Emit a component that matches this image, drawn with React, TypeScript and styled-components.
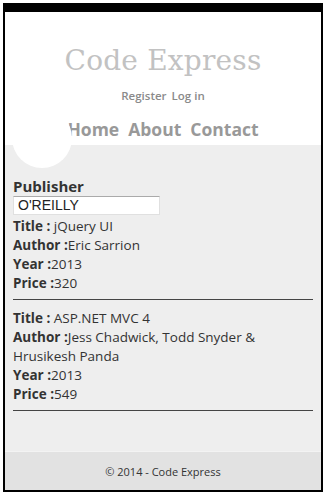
import React from "react";
import styled, { createGlobalStyle } from "styled-components";

const GlobalStyle = createGlobalStyle`
  html, body {
    margin: 0;
    padding: 0;
    background: #fff;
  }
`;

const Frame = styled.div`
  margin: 3px 3px 0 3px;
  height: 478px;
  border: 2px solid #000;
  border-top-width: 9px;
  display: flex;
  flex-direction: column;
  font-family: "Open Sans", "Noto Sans", sans-serif;
  color: #333;
`;

const Header = styled.header`
  height: 133px;
  background: #fff;
  display: flex;
  flex-direction: column;
  align-items: center;
  padding-top: 32px;
  box-sizing: border-box;
`;

const SiteTitle = styled.h1`
  margin: 0;
  font-family: "DejaVu Serif", serif;
  font-weight: 400;
  font-size: 28px;
  line-height: 34px;
  color: #c2c2c2;
  letter-spacing: 0.2px;
`;

const LoginLinks = styled.div`
  margin-top: 10px;
  display: flex;
  gap: 5px;
  font-size: 11.5px;
  font-weight: 600;
  line-height: 16px;
  color: #8a8a8a;
`;

const Menu = styled.nav`
  margin-top: 14px;
  display: flex;
  gap: 9px;
  font-size: 17.5px;
  font-weight: 700;
  line-height: 22px;
  color: #999;
`;

const Main = styled.main`
  position: relative;
  flex: 1;
  background: #eeeeee;
  padding: 31px 8px 0 8px;

  &::before {
    content: "";
    position: absolute;
    left: 7px;
    top: -37px;
    width: 60px;
    height: 60px;
    border-radius: 50%;
    background: #fff;
  }
`;

const Section = styled.div`
  position: relative;
`;

const Heading = styled.h3`
  margin: 0;
  font-size: 15px;
  font-weight: 700;
  line-height: 20px;
  color: #333;
`;

const PublisherBox = styled.div`
  width: 147px;
  height: 19px;
  box-sizing: border-box;
  background: #fff;
  border: 1px solid #e0e0e0;
  border-top-color: #aaa;
  padding-left: 4px;
  font-family: "Liberation Sans", Arial, sans-serif;
  font-size: 14px;
  line-height: 17px;
  color: #222;
  margin-bottom: 2px;
`;

const Book = styled.div`
  padding-bottom: 6px;
  border-bottom: 1px solid #444;
  margin-bottom: 9px;
`;

const Line = styled.div`
  max-width: 285px;
  font-size: 13.5px;
  line-height: 19px;
  color: #333;

  b {
    font-weight: 700;
  }
`;

const Footer = styled.footer`
  height: 38px;
  background: #e2e2e2;
  border-top: 1px solid #f3f3f3;
  display: flex;
  align-items: center;
  justify-content: center;
  font-size: 11px;
  color: #333;
`;

const books = [
  { title: "jQuery UI", author: "Eric Sarrion", year: "2013", price: "320" },
  {
    title: "ASP.NET MVC 4",
    author: "Jess Chadwick, Todd Snyder & Hrusikesh Panda",
    year: "2013",
    price: "549",
  },
];

export default function App() {
  return (
    <>
      <GlobalStyle />
      <Frame>
        <Header>
          <SiteTitle>Code Express</SiteTitle>
          <LoginLinks>
            <span>Register</span>
            <span>Log in</span>
          </LoginLinks>
          <Menu>
            <span>Home</span>
            <span>About</span>
            <span>Contact</span>
          </Menu>
        </Header>
        <Main>
          <Section>
            <Heading>Publisher</Heading>
            <PublisherBox>O'REILLY</PublisherBox>
            {books.map((b) => (
              <Book key={b.title}>
                <Line>
                  <b>Title : </b>
                  {b.title}
                </Line>
                <Line>
                  <b>Author :</b>
                  {b.author}
                </Line>
                <Line>
                  <b>Year :</b>
                  {b.year}
                </Line>
                <Line>
                  <b>Price :</b>
                  {b.price}
                </Line>
              </Book>
            ))}
          </Section>
        </Main>
        <Footer>© 2014 - Code Express</Footer>
      </Frame>
    </>
  );
}
